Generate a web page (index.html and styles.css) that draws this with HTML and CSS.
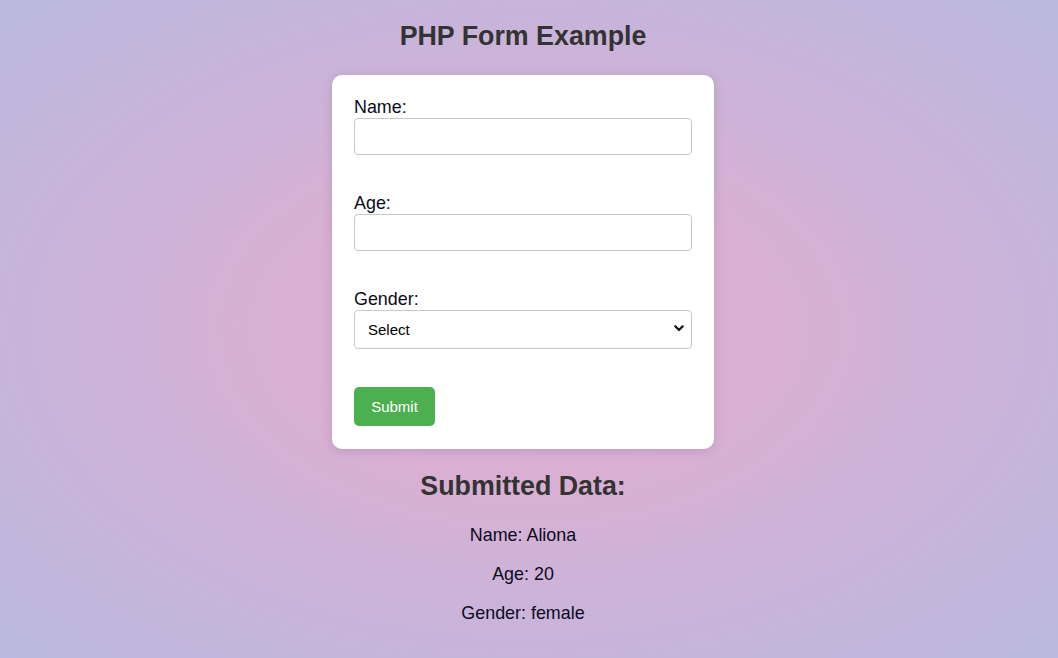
FILE: index.html
```html
<!DOCTYPE html>
<html lang="en">
<head>
<meta charset="utf-8">
<title>PHP Form Example</title>
<link rel="stylesheet" href="styles.css">
</head>
<body>
<main class="page">
  <h1 class="title">PHP Form Example</h1>
  <form class="card">
    <label class="label" for="name">Name:</label>
    <input class="field" id="name" type="text">
    <label class="label" for="age">Age:</label>
    <input class="field" id="age" type="text">
    <label class="label" for="gender">Gender:</label>
    <div class="select-wrap">
      <select class="field select" id="gender">
        <option>Select</option>
        <option>male</option>
        <option>female</option>
      </select>
      <svg class="chevron" width="10" height="7" viewBox="0 0 10 7" aria-hidden="true"><path d="M1.3 1.3 L5 5 L8.7 1.3" fill="none" stroke="#111" stroke-width="2.2" stroke-linecap="round" stroke-linejoin="round"/></svg>
    </div>
    <div class="actions"><button class="submit" type="button">Submit</button></div>
  </form>
  <h2 class="subtitle">Submitted Data:</h2>
  <p class="data">Name: Aliona</p>
  <p class="data">Age: 20</p>
  <p class="data">Gender: female</p>
</main>
</body>
</html>
```
FILE: styles.css
```css
html {
  min-height: 100%;
  background: radial-gradient(ellipse at 50% 50%, #dfafd1 0%, #d8b0d4 35%, #c4b5dc 75%, #bab8de 100%);
}
body {
  margin: 0;
  min-height: 658px;
  font-family: "Liberation Sans", Arial, sans-serif;
  color: #000;
}
.page {
  display: flex;
  flex-direction: column;
  align-items: center;
  padding: 21px 12px 0 0;
}
.title {
  margin: 0 0 23px;
  font-size: 26.8px;
  font-weight: bold;
  color: #333;
  line-height: 31px;
}
.card {
  width: 338px;
  padding: 21px 22px 23px;
  background: #fff;
  border-radius: 10px;
  box-shadow: 0 2px 12px rgba(0, 0, 0, 0.12);
  display: flex;
  flex-direction: column;
}
.label {
  font-size: 17.9px;
  line-height: 22px;
  color: #0b0b1e;
}
.field {
  box-sizing: border-box;
  width: 338px;
  height: 37px;
  margin: 0 0 37px;
  border: 1px solid #c8c8c8;
  border-radius: 4px;
  background: #fff;
  font-family: "Liberation Sans", Arial, sans-serif;
  font-size: 15px;
  padding: 0 10px;
}
.select-wrap {
  position: relative;
  display: flex;
}
.select {
  -webkit-appearance: none;
  appearance: none;
  height: 39px;
  margin-bottom: 38px;
  padding: 0 30px 0 13px;
  color: #000;
}
.chevron {
  position: absolute;
  right: 8px;
  top: 15px;
  pointer-events: none;
}
.actions {
  display: flex;
}
.submit {
  width: 81px;
  height: 39px;
  border: 0;
  border-radius: 5px;
  background: #4caf50;
  color: #fff;
  font-family: "Liberation Sans", Arial, sans-serif;
  font-size: 15px;
  padding: 0;
}
.subtitle {
  margin: 22px 0 23px;
  font-size: 26.8px;
  font-weight: bold;
  color: #333;
  line-height: 31px;
}
.data {
  margin: 0 0 18.4px;
  font-size: 17.9px;
  line-height: 20.6px;
  color: #0b0b1e;
}
```
